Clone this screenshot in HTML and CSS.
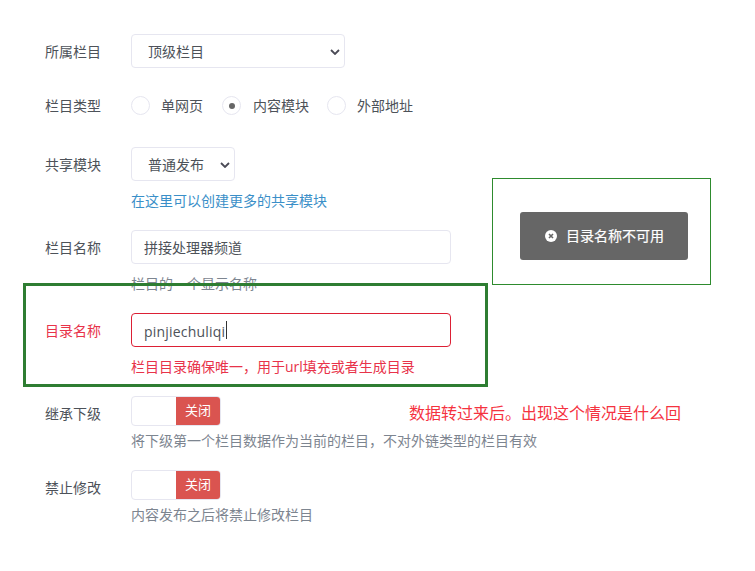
FILE: index.html
```html
<!DOCTYPE html>
<html lang="zh-CN">
<head>
<meta charset="utf-8">
<title>栏目设置</title>
<link rel="stylesheet" href="styles.css">
</head>
<body>
<form class="form">
  <div class="row row-parent">
    <label class="label">所属栏目</label>
    <div class="field">
      <div class="select-wrap wide">
        <select class="select"><option>顶级栏目</option></select>
        <svg class="chevron" viewBox="0 0 10 6" width="10" height="6"><path d="M1 1l4 4 4-4" fill="none" stroke="#4a4a55" stroke-width="1.8"/></svg>
      </div>
    </div>
  </div>
  <div class="row row-type">
    <label class="label">栏目类型</label>
    <div class="radios">
      <span class="radio"></span><span class="radio-text first">单网页</span>
      <span class="radio checked"></span><span class="radio-text second">内容模块</span>
      <span class="radio"></span><span class="radio-text">外部地址</span>
    </div>
  </div>
  <div class="row row-share">
    <label class="label">共享模块</label>
    <div class="field">
      <div class="select-wrap narrow">
        <select class="select"><option>普通发布</option></select>
        <svg class="chevron" viewBox="0 0 10 6" width="10" height="6"><path d="M1 1l4 4 4-4" fill="none" stroke="#4a4a55" stroke-width="1.8"/></svg>
      </div>
      <a class="help link">在这里可以创建更多的共享模块</a>
    </div>
  </div>
  <div class="row row-name">
    <label class="label">栏目名称</label>
    <div class="field">
      <input class="input" type="text" value="拼接处理器频道">
      <p class="help">栏目的一个显示名称</p>
    </div>
  </div>
  <div class="row row-dir invalid">
    <label class="label">目录名称</label>
    <div class="field">
      <div class="input-wrap">
        <input class="input latin" type="text" value="pinjiechuliqi">
        <span class="caret"></span>
      </div>
      <p class="help">栏目目录确保唯一，用于url填充或者生成目录</p>
    </div>
  </div>
  <div class="row row-inherit">
    <label class="label">继承下级</label>
    <div class="field">
      <div class="switch"><span class="switch-off">关闭</span></div>
      <p class="help tight">将下级第一个栏目数据作为当前的栏目，不对外链类型的栏目有效</p>
    </div>
  </div>
  <div class="row">
    <label class="label">禁止修改</label>
    <div class="field">
      <div class="switch"><span class="switch-off">关闭</span></div>
      <p class="help tight">内容发布之后将禁止修改栏目</p>
    </div>
  </div>
</form>

<div class="mark mark-field"></div>
<div class="mark-toast">
  <div class="toast">
    <svg class="toast-icon" viewBox="0 0 12 12" width="12" height="12"><circle cx="6" cy="6" r="6" fill="#fff"/><path d="M4 4l4 4M8 4l-4 4" stroke="#666" stroke-width="1.6"/></svg>
    <span>目录名称不可用</span>
  </div>
</div>
<p class="note">数据转过来后。出现这个情况是什么回</p>
</body>
</html>
```
FILE: styles.css
```css
* { box-sizing: border-box; }
html, body { margin: 0; padding: 0; }
body {
  position: relative;
  width: 755px;
  height: 571px;
  overflow: hidden;
  background: #fff;
  font-family: "Open Sans", "Noto Sans CJK SC", sans-serif;
  font-size: 14px;
  line-height: 20px;
  color: #4d5259;
}
.form { padding: 34px 0 0 45px; }
.row { display: flex; align-items: flex-start; }
.label { width: 86px; height: 30px; flex: none; line-height: 34px; padding-top: 1px; color: #4d5259; }
.field { display: flex; flex-direction: column; align-items: flex-start; }
.row-parent { margin-bottom: 28px; }
.row-type { margin-bottom: 32px; height: 19px; }
.row-type .label { line-height: 20px; height: 19px; padding-top: 0; }
.row-share { margin-bottom: 19px; }
.row-name { margin-bottom: 19px; }
.row-dir { margin-bottom: 19px; }
.row-inherit { margin-bottom: 19px; }

.select-wrap { position: relative; height: 34px; }
.select-wrap.wide { width: 214px; }
.select-wrap.narrow { width: 104px; }
.select {
  appearance: none;
  width: 100%;
  height: 34px;
  padding: 2px 12px 0 16px;
  border: 1px solid #e6e6f0;
  border-radius: 4px;
  background: #fff;
  font: inherit;
  color: #4d5259;
}
.chevron { position: absolute; right: 5px; top: 14.5px; }

.radios { display: flex; align-items: center; height: 19px; }
.radio {
  width: 19px;
  height: 19px;
  border: 1px solid #e6e6f0;
  border-radius: 50%;
  background: #fff;
  display: flex;
  align-items: center;
  justify-content: center;
}
.radio.checked::after {
  content: "";
  width: 6px;
  height: 6px;
  border-radius: 50%;
  background: #666;
}
.radio-text { margin-left: 11px; padding-top: 1px; }
.radio-text.first { margin-right: 19px; }
.radio-text.second { margin-left: 12px; margin-right: 18px; }

.input-wrap { position: relative; }
.input {
  display: block;
  width: 320px;
  height: 34px;
  padding: 0 12px;
  border: 1px solid #e6e6f0;
  border-radius: 4px;
  background: #fff;
  font: inherit;
  color: #4d5259;
  outline: none;
}
.input.latin { padding-top: 2px; letter-spacing: 0.2px; }
.caret {
  position: absolute;
  left: 95px;
  top: 8px;
  width: 1px;
  height: 18px;
  background: #333;
}
.help { margin: 10px 0 0; line-height: 20px; color: #7d8590; }
.help.tight { margin-top: 5px; }
.link { color: #3a8fc8; }

.invalid .label, .invalid .help { color: #e8334a; }
.invalid .input { border-color: #dc2035; }

.switch {
  width: 90px;
  height: 30px;
  border: 1px solid #e6e6f0;
  border-radius: 4px;
  display: flex;
  justify-content: flex-end;
  overflow: hidden;
}
.switch-off {
  width: 44px;
  background: #da5450;
  color: #fff;
  font-size: 13px;
  line-height: 27px;
  text-align: center;
}

.mark { position: absolute; border: 3px solid #2e7d32; }
.mark-field { left: 23px; top: 283px; width: 465px; height: 104px; }
.mark-toast {
  position: absolute;
  left: 492px;
  top: 178px;
  width: 219px;
  height: 107px;
  border: 1px solid #2e8b2e;
  display: flex;
  align-items: flex-start;
  justify-content: flex-start;
  padding: 33px 0 0 27px;
}
.toast {
  width: 168px;
  height: 48px;
  background: #666;
  border-radius: 3px;
  color: #fff;
  display: flex;
  align-items: center;
  padding-left: 25px;
  gap: 9px;
  -webkit-text-stroke: 0.2px #fff;
}
.toast-icon { flex: none; }
.note {
  position: absolute;
  left: 409px;
  top: 401px;
  margin: 0;
  font-size: 16px;
  line-height: 24px;
  color: #f5333f;
}
```
